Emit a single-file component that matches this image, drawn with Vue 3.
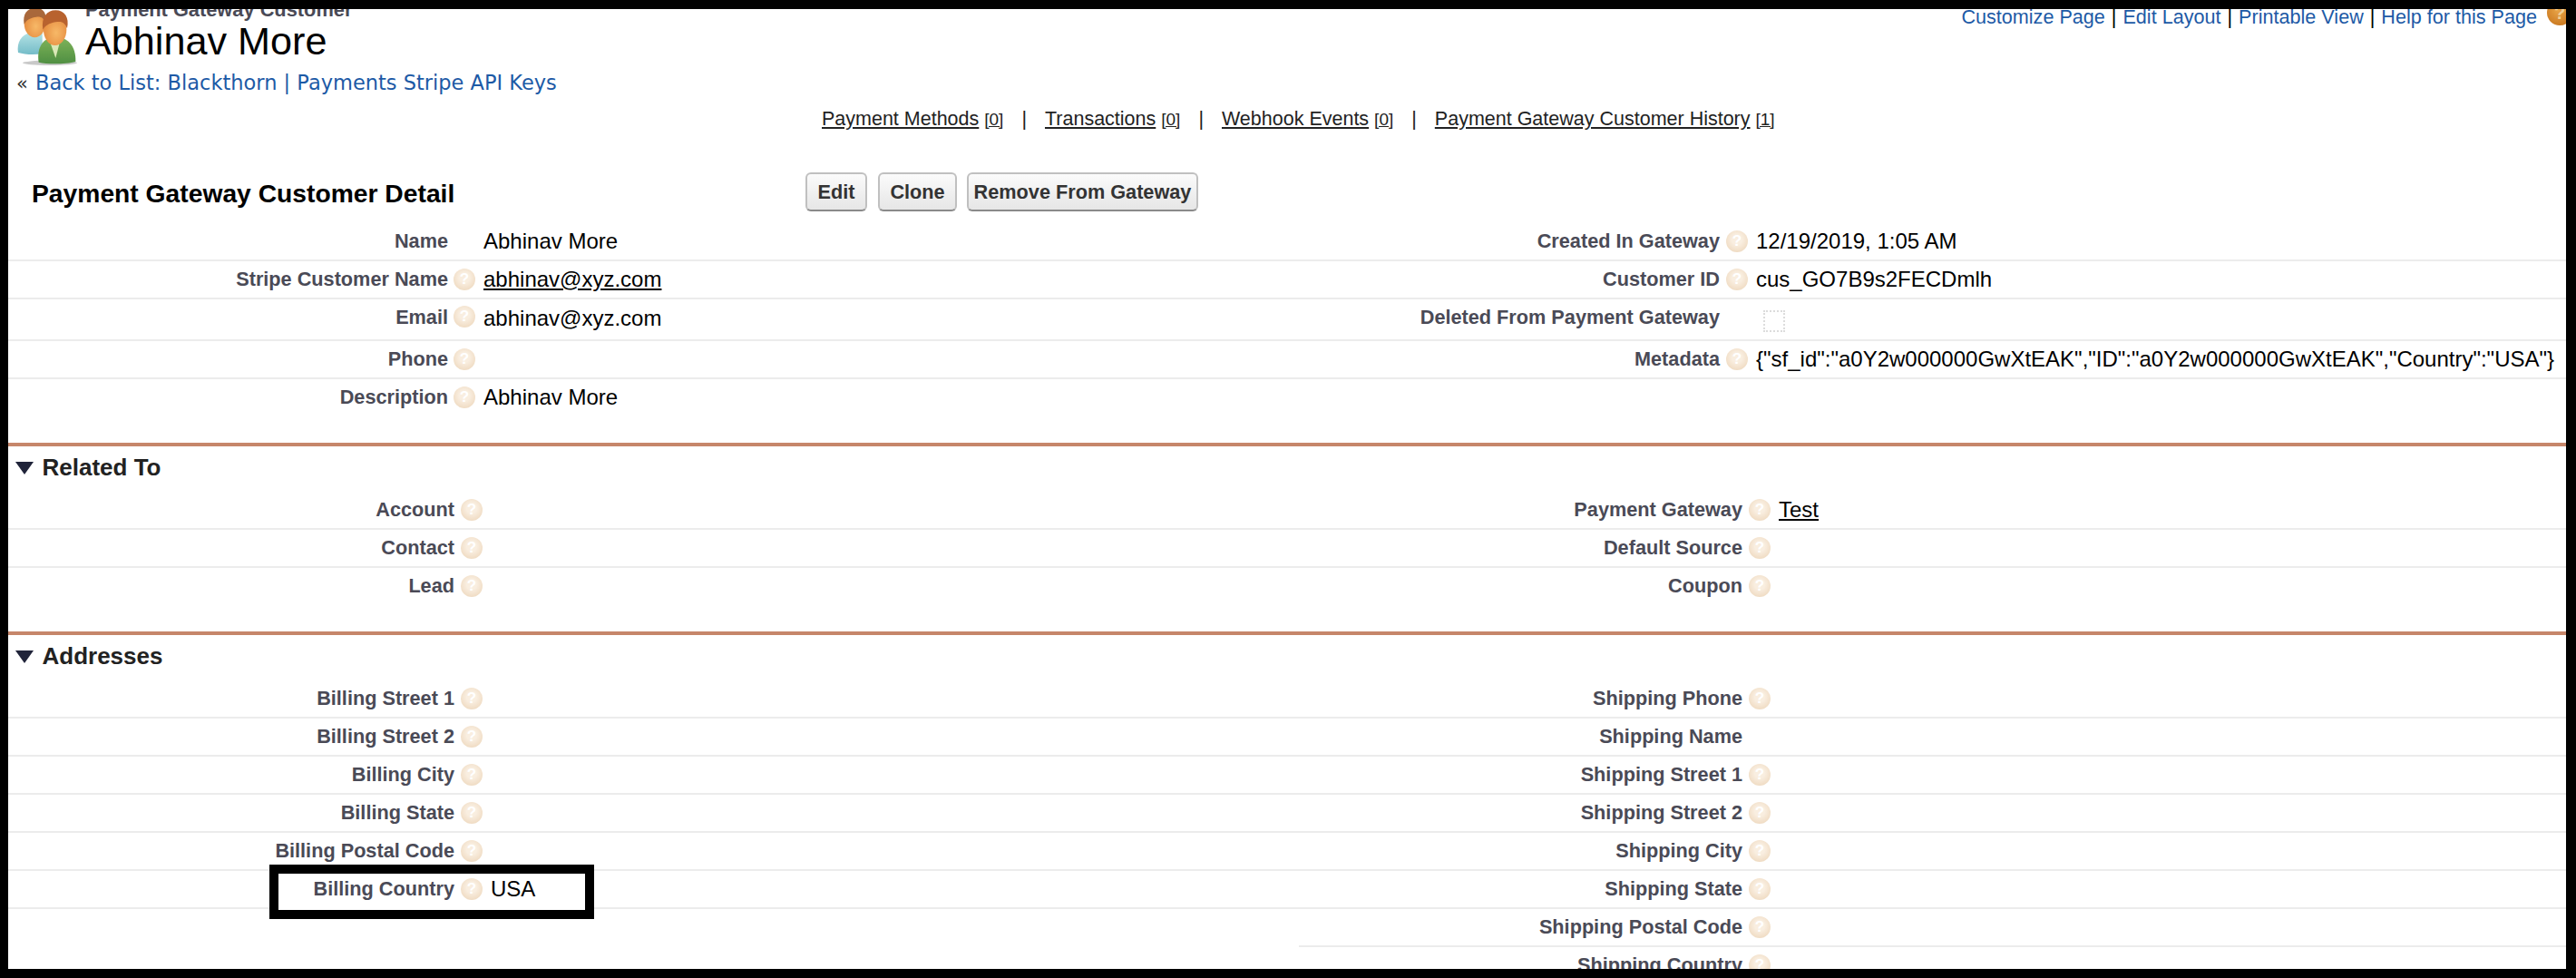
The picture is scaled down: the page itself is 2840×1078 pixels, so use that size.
<script setup>
const detailLeft = [
  { label: 'Name', value: 'Abhinav More', help: false },
  { label: 'Stripe Customer Name', value: 'abhinav@xyz.com', help: true, link: true },
  { label: 'Email', value: 'abhinav@xyz.com', help: true, tall: true },
  { label: 'Phone', help: true },
  { label: 'Description', value: 'Abhinav More', help: true, last: true },
]
const detailRight = [
  { label: 'Created In Gateway', value: '12/19/2019, 1:05 AM', help: true },
  { label: 'Customer ID', value: 'cus_GO7B9s2FECDmlh', help: true },
  { label: 'Deleted From Payment Gateway', check: true, tall: true },
  { label: 'Metadata', value: '{"sf_id":"a0Y2w000000GwXtEAK","ID":"a0Y2w000000GwXtEAK","Country":"USA"}', help: true },
]
const relatedLeft = [
  { label: 'Account', help: true },
  { label: 'Contact', help: true },
  { label: 'Lead', help: true, last: true },
]
const relatedRight = [
  { label: 'Payment Gateway', value: 'Test', help: true, link: true },
  { label: 'Default Source', help: true },
  { label: 'Coupon', help: true, last: true },
]
const addressLeft = [
  { label: 'Billing Street 1', help: true },
  { label: 'Billing Street 2', help: true },
  { label: 'Billing City', help: true },
  { label: 'Billing State', help: true },
  { label: 'Billing Postal Code', help: true },
  { label: 'Billing Country', value: 'USA', help: true, boxed: true },
]
const addressRight = [
  { label: 'Shipping Phone', help: true },
  { label: 'Shipping Name' },
  { label: 'Shipping Street 1', help: true },
  { label: 'Shipping Street 2', help: true },
  { label: 'Shipping City', help: true },
  { label: 'Shipping State', help: true },
  { label: 'Shipping Postal Code', help: true },
  { label: 'Shipping Country', help: true },
]
const sections = [
  { title: 'Related To', left: relatedLeft, right: relatedRight },
  { title: 'Addresses', left: addressLeft, right: addressRight },
]
const topLinks = ['Customize Page', 'Edit Layout', 'Printable View', 'Help for this Page']
const relatedLinks = [
  { text: 'Payment Methods', count: 0 },
  { text: 'Transactions', count: 0 },
  { text: 'Webhook Events', count: 0 },
  { text: 'Payment Gateway Customer History', count: 1 },
]
</script>

<template>
  <div class="frame">
    <div class="page">
      <header class="head">
        <svg class="people" viewBox="0 0 270 210" aria-hidden="true">
          <defs>
            <linearGradient id="bodyBack" x1="0" y1="0" x2="0" y2="1"><stop offset="0" stop-color="#b4e2e4"/><stop offset="1" stop-color="#74bcc8"/></linearGradient>
            <linearGradient id="bodyFront" x1="0" y1="0" x2="0" y2="1"><stop offset="0" stop-color="#7fb45a"/><stop offset="1" stop-color="#4f8f42"/></linearGradient>
            <radialGradient id="face" cx="0.55" cy="0.6" r="0.6"><stop offset="0" stop-color="#f7b968"/><stop offset="1" stop-color="#e58a3e"/></radialGradient>
            <filter id="soft" x="-10%" y="-10%" width="120%" height="120%"><feGaussianBlur stdDeviation="2"/></filter>
          </defs>
          <ellipse cx="135" cy="184" rx="90" ry="8" fill="#c9c9c9" filter="url(#soft)"/>
          <g filter="url(#soft)">
            <path d="M30 150c-6-34 12-60 40-66h40v70c-30 4-60 2-80-4z" fill="url(#bodyBack)"/>
            <ellipse cx="85" cy="54" rx="35" ry="46" fill="url(#face)"/>
            <path d="M50 56C44 22 60 2 88 2c26 0 38 18 32 48-6-14-14-20-30-18-16 2-32 8-40 24z" fill="#a9683a"/>
            <path d="M98 182c-8-50 16-82 52-84 40-2 72 26 70 82-30 8-92 10-122 2z" fill="url(#bodyFront)"/>
            <path d="M138 122l28 0-12 46z" fill="#dbe8b8"/>
            <ellipse cx="152" cy="74" rx="38" ry="52" fill="url(#face)"/>
            <path d="M112 74c-6-40 12-64 42-64 30 0 46 24 38 60-6-16-14-24-32-22-18 2-38 8-48 26z" fill="#b8622f"/>
          </g>
        </svg>
        <div class="head-titles">
          <div class="kind">Payment Gateway Customer</div>
          <h1 class="name">Abhinav More</h1>
        </div>
        <nav class="top-links">
          <template v-for="(link, i) in topLinks" :key="link">
            <a class="top-link">{{ link }}</a>
            <span v-if="i < topLinks.length - 1" class="top-sep">|</span>
          </template>
          <svg class="help-top" viewBox="0 0 28 28" aria-hidden="true">
            <defs><radialGradient id="orange" cx="0.45" cy="0.4" r="0.65"><stop offset="0" stop-color="#e9a548"/><stop offset="1" stop-color="#c9771f"/></radialGradient></defs>
            <circle cx="14" cy="14" r="14" fill="url(#orange)"/>
            <text x="14" y="21" text-anchor="middle" class="help-top-q">?</text>
          </svg>
        </nav>
      </header>

      <div class="back"><span class="back-mark">«</span> <a class="back-link">Back to List: Blackthorn | Payments Stripe API Keys</a></div>

      <div class="related">
        <template v-for="(link, i) in relatedLinks" :key="link.text">
          <span class="rel-item"><a class="rel-link">{{ link.text }}</a> <span class="rel-count">[{{ link.count }}]</span></span>
          <span v-if="i < relatedLinks.length - 1" class="rel-sep">|</span>
        </template>
      </div>

      <div class="detail-title">
        <h2 class="detail-h">Payment Gateway Customer Detail</h2>
        <div class="buttons">
          <button class="btn btn-edit">Edit</button>
          <button class="btn btn-clone">Clone</button>
          <button class="btn btn-remove">Remove From Gateway</button>
        </div>
      </div>

      <section class="block block-detail">
        <div class="col col-left">
          <div v-for="r in detailLeft" :key="r.label" class="row" :class="{ tall: r.tall, last: r.last }">
            <div class="label">{{ r.label }}</div>
            <div class="help-slot"><span v-if="r.help" class="help">?</span></div>
            <div class="value" :class="{ link: r.link }">{{ r.value }}</div>
          </div>
        </div>
        <div class="col col-right">
          <div v-for="r in detailRight" :key="r.label" class="row" :class="{ tall: r.tall }">
            <div class="label">{{ r.label }}</div>
            <div class="help-slot"><span v-if="r.help" class="help">?</span></div>
            <div class="value"><span v-if="r.check" class="check"></span>{{ r.value }}</div>
          </div>
        </div>
      </section>

      <template v-for="s in sections" :key="s.title">
        <div class="section-head">
          <svg class="twist" viewBox="0 0 20 14" aria-hidden="true"><path d="M0 0h20L10 14z" fill="#20243a"/></svg>
          <h3 class="section-title">{{ s.title }}</h3>
        </div>
        <section class="block block-sub">
          <div class="col col-left">
            <div v-for="r in s.left" :key="r.label" class="row" :class="{ last: r.last, boxed: r.boxed }">
              <div v-if="r.boxed" class="annot"></div>
              <div class="label">{{ r.label }}</div>
              <div class="help-slot"><span v-if="r.help" class="help">?</span></div>
              <div class="value">{{ r.value }}</div>
            </div>
          </div>
          <div class="col col-right">
            <div v-for="r in s.right" :key="r.label" class="row" :class="{ last: r.last }">
              <div class="label">{{ r.label }}</div>
              <div class="help-slot"><span v-if="r.help" class="help">?</span></div>
              <div class="value" :class="{ link: r.link }">{{ r.value }}</div>
            </div>
          </div>
        </section>
      </template>
    </div>
  </div>
</template>

<style>
html, body { margin: 0; background: #000; }
</style>

<style scoped>
.frame {
  box-sizing: border-box;
  width: 2840px;
  height: 1078px;
  padding: 10px 11px 10px 9px;
  background: #000;
}
.page {
  height: 1058px;
  overflow: hidden;
  background: #fff;
  font-family: "Liberation Sans", Arial, sans-serif;
  color: #000;
}
.head {
  display: flex;
  height: 63px;
}
.people {
  width: 90px;
  height: 70px;
  margin: -2px -6px 0 1px;
  flex: none;
}
.head-titles { margin-top: -11px; }
.kind {
  font-size: 21.8px;
  line-height: 23px;
  font-weight: 700;
  color: #4a4a56;
}
.name {
  margin: -2px 0 0;
  font-size: 43.2px;
  line-height: 50px;
  font-weight: 400;
}
.top-links {
  margin-left: auto;
  display: flex;
  align-items: flex-start;
  font-size: 21.6px;
  line-height: 26px;
  margin-top: -4px;
}
.top-link { color: #1d5aa6; }
.top-sep { margin: 0 7px; }
.help-top { width: 28px; height: 28px; margin: -6px -7px 0 11px; flex: none; }
.help-top-q { font: 700 20px "Liberation Sans", sans-serif; fill: #f0cf98; }
.back {
  height: 34px;
  padding-left: 9px;
  font-family: "DejaVu Sans", Verdana, sans-serif;
  font-size: 22.5px;
  line-height: 36px;
  white-space: nowrap;
}
.back-mark { color: #333; font-size: 21px; margin-right: 1px; }
.back-link { color: #1d5aa6; }
.related {
  display: flex;
  height: 48px;
  margin-left: 897px;
  align-items: center;
  font-size: 21.5px;
  color: #222;
}
.rel-link { text-decoration: underline; }
.rel-count { font-size: 19px; text-decoration: underline; }
.rel-sep { margin: 0 20px; }
.detail-title {
  display: flex;
  align-items: center;
  height: 66px;
  margin-top: 25px;
  padding-left: 26px;
}
.detail-h {
  margin: 0;
  width: 853px;
  font-size: 28.25px;
  font-weight: 700;
  white-space: nowrap;
  flex: none;
}
.buttons { display: flex; gap: 11px; margin-top: -3px; }
.btn {
  box-sizing: border-box;
  height: 43px;
  padding: 0;
  font: 700 21.7px "Liberation Sans", sans-serif;
  color: #333;
  background: linear-gradient(#fbfbfb, #e6e6e6);
  border: 2px solid #c0c0c0;
  border-bottom-color: #8a8a8a;
  border-radius: 6px;
}
.btn-edit { width: 68px; margin-right: 1px; }
.btn-clone { width: 87px; }
.btn-remove { width: 255px; }
.block { display: grid; align-content: start; }
.block-detail {
  grid-template-columns: 1423px 1397px;
  height: 242px;
  box-sizing: content-box;
  border-bottom: 4px solid #c6866a;
}
.block-sub {
  grid-template-columns: 1423px 1397px;
  padding-bottom: 28px;
  border-bottom: 4px solid #c6866a;
}
.block-sub:last-child { border-bottom: 0; padding-bottom: 0; }
.row {
  position: relative;
  box-sizing: border-box;
  display: flex;
  align-items: center;
  height: 42px;
  border-bottom: 2px solid #ececec;
  padding-bottom: 1px;
}
.row.tall { height: 46px; align-items: flex-start; padding-top: 7px; }
.row.last { border-bottom-color: transparent; }
.label {
  position: relative;
  z-index: 1;
  box-sizing: border-box;
  flex: none;
  font-size: 21.7px;
  font-weight: 700;
  color: #4a4a56;
  text-align: right;
  white-space: nowrap;
}
.help-slot {
  position: relative;
  z-index: 1;
  flex: none;
  width: 24px;
  height: 24px;
  margin: 0 9px 0 6px;
}
.help {
  display: flex;
  align-items: center;
  justify-content: center;
  width: 24px;
  height: 24px;
  border-radius: 50%;
  background: radial-gradient(circle at 50% 42%, #f9eee0 0 30%, #f2e0ca 65%, #e8d2b5 100%);
  color: #fff;
  font-size: 17px;
  font-weight: 700;
  line-height: 24px;
}
.value {
  position: relative;
  z-index: 1;
  font-size: 24px;
  white-space: nowrap;
}
.value.link { text-decoration: underline; }
.check {
  display: block;
  box-sizing: border-box;
  width: 24px;
  height: 24px;
  margin: 5px 0 0 8px;
  border: 2px dotted #dcdcdc;
}
.block-detail .col-left .label { width: 485px; }
.block-detail .col-right .label { width: 464px; }
.block-detail .col-right .help-slot { margin: 0 9px 0 7px; }
.block-sub .label { width: 492px; margin-right: 1px; }
.block-sub .col-right .label { width: 489px; }
.annot {
  position: absolute;
  left: 288px;
  top: -7px;
  width: 358px;
  height: 60px;
  box-sizing: border-box;
  border: 10px solid #000;
  background: #fff;
}
.section-head {
  box-sizing: border-box;
  display: flex;
  align-items: center;
  height: 50px;
  padding: 0 0 3px 8px;
}
.twist { width: 20px; height: 14px; flex: none; margin-right: 9.5px; }
.section-title {
  margin: 0;
  font-size: 26px;
  font-weight: 700;
  color: #222;
}
</style>
